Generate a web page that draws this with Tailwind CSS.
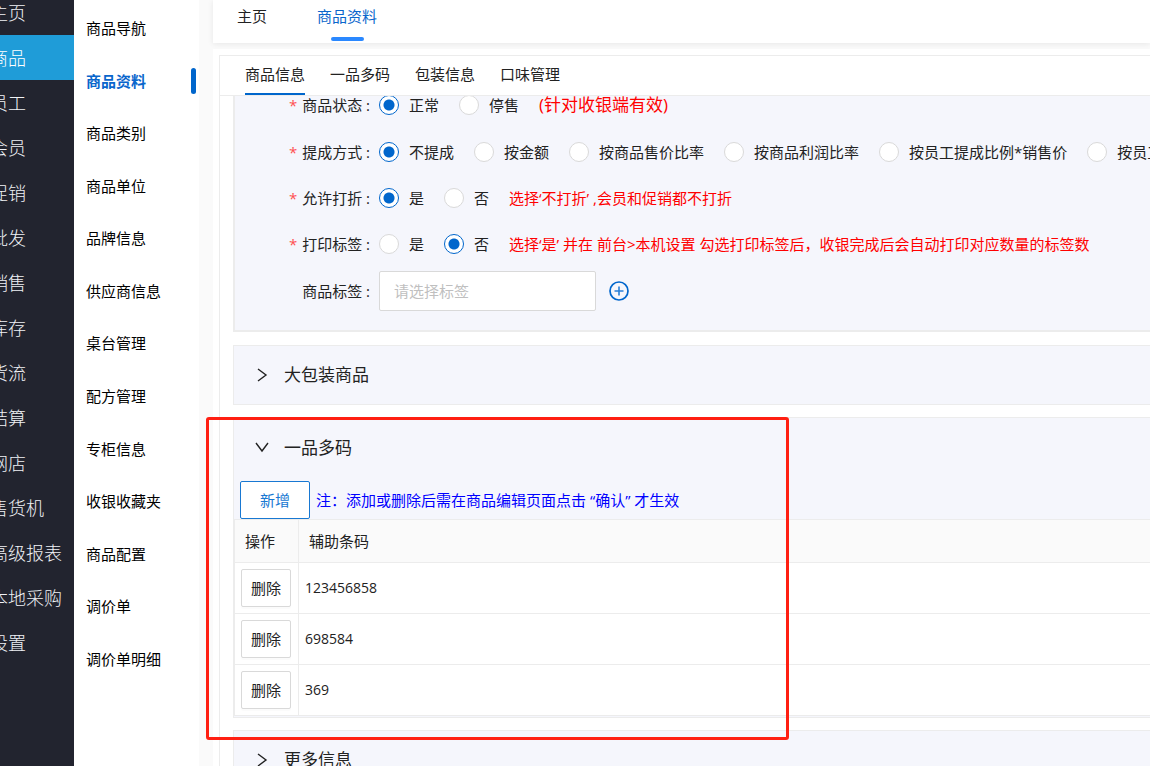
<!DOCTYPE html>
<html lang="zh-CN">
<head>
<meta charset="utf-8">
<meta name="viewport" content="width=device-width, initial-scale=1">
<title>商品资料</title>
<script src="https://cdn.jsdelivr.net/npm/@tailwindcss/browser@4"></script>
</head>
<body class="relative flex h-screen overflow-hidden bg-[#fafafa] font-['Open_Sans','Noto_Sans_CJK_SC',sans-serif] text-[15px] leading-6 font-normal text-[#222]">

<!-- Primary navigation -->
<nav aria-label="主导航" class="w-[74px] shrink-0 overflow-hidden bg-[#22242f] text-lg font-light whitespace-nowrap text-[#f0f2f6]">
  <ul class="-mt-[10px] *:flex *:h-[45px] *:items-center *:pt-px">
    <li class="-ml-[10px]"><a href="#">主页</a></li>
    <li class="bg-[#1f9cd8] text-white"><a href="#" class="-ml-[10px]">商品</a></li>
    <li class="-ml-[10px]"><a href="#">员工</a></li>
    <li class="-ml-[10px]"><a href="#">会员</a></li>
    <li class="-ml-[10px]"><a href="#">促销</a></li>
    <li class="-ml-[10px]"><a href="#">批发</a></li>
    <li class="-ml-[10px]"><a href="#">销售</a></li>
    <li class="-ml-[10px]"><a href="#">库存</a></li>
    <li class="-ml-[10px]"><a href="#">货流</a></li>
    <li class="-ml-[10px]"><a href="#">结算</a></li>
    <li class="-ml-[10px]"><a href="#">网店</a></li>
    <li class="-ml-[10px]"><a href="#">售货机</a></li>
    <li class="-ml-[10px]"><a href="#">高级报表</a></li>
    <li class="-ml-[10px]"><a href="#">本地采购</a></li>
    <li class="-ml-[10px]"><a href="#">设置</a></li>
  </ul>
</nav>

<!-- Secondary navigation -->
<nav aria-label="商品" class="w-[125px] shrink-0 bg-white text-black">
  <ul class="grid h-[685px] auto-rows-fr pt-[2px] pr-[3px] pl-3 *:flex *:items-center">
    <li><a href="#">商品导航</a></li>
    <li class="justify-between font-semibold text-[#0a66cc]"><a href="#">商品资料</a><span class="h-[26px] w-[5px] rounded-sm bg-[#0066cc]"></span></li>
    <li><a href="#">商品类别</a></li>
    <li><a href="#">商品单位</a></li>
    <li><a href="#">品牌信息</a></li>
    <li><a href="#">供应商信息</a></li>
    <li><a href="#">桌台管理</a></li>
    <li><a href="#">配方管理</a></li>
    <li><a href="#">专柜信息</a></li>
    <li><a href="#">收银收藏夹</a></li>
    <li><a href="#">商品配置</a></li>
    <li><a href="#">调价单</a></li>
    <li><a href="#">调价单明细</a></li>
  </ul>
</nav>

<main class="ml-[14px] flex min-w-0 flex-1 flex-col">
  <div class="flex h-[43px] shrink-0 gap-[50px] bg-white pl-6 shadow-[0_1px_6px_rgba(0,0,0,0.08)]">
    <a href="#" class="pt-1">主页</a>
    <a href="#" class="flex flex-col items-center justify-between pt-1 pb-[2px] text-[#0a66cc]">商品资料<span class="h-1 w-[33px] rounded-xs bg-[#2a88ff]"></span></a>
  </div>

  <div class="mt-[6px] flex min-h-0 flex-1 flex-col bg-white pt-[6px] pl-[6px]">
    <div class="flex min-h-0 flex-1 flex-col border-t border-l border-[#ececec]">
      <div class="z-10 flex h-10 shrink-0 gap-[25px] border-b border-[#ececec] bg-white pl-[25px]">
        <a href="#" class="h-[39px] border-b-2 border-[#0066cc] pt-[6px]">商品信息</a>
        <a href="#" class="pt-[6px]">一品多码</a>
        <a href="#" class="pt-[6px]">包装信息</a>
        <a href="#" class="pt-[6px]">口味管理</a>
      </div>

      <div class="flex min-h-0 flex-1 flex-col gap-3 overflow-hidden pl-[13px]">
        <!-- Product settings -->
        <form class="-mt-[14px] mb-px shrink-0 border-b-2 border-l-2 border-[#ececec] bg-[#f5f6fc] pb-4 whitespace-nowrap">
          <fieldset aria-label="商品状态" class="mb-px flex h-[46px] items-center gap-5">
            <div class="-mr-[11px] flex w-[135px] shrink-0 justify-end gap-[5px]"><span class="text-[#ff5050]">*</span><span>商品状态 :</span></div>
            <label class="flex items-center gap-[10px]"><input type="radio" name="status" checked class="size-5 appearance-none rounded-full border border-[#d9d9d9] bg-white checked:border-[#0066cc] checked:bg-[radial-gradient(circle,#0066cc_5px,#fff_6px)]">正常</label>
            <label class="flex items-center gap-[10px]"><input type="radio" name="status" class="size-5 appearance-none rounded-full border border-[#d9d9d9] bg-white checked:border-[#0066cc] checked:bg-[radial-gradient(circle,#0066cc_5px,#fff_6px)]">停售</label>
            <span class="text-[17px] text-[#f00]">(针对收银端有效)</span>
          </fieldset>
          <fieldset aria-label="提成方式" class="flex h-[46px] items-center gap-5">
            <div class="-mr-[11px] flex w-[135px] shrink-0 justify-end gap-[5px]"><span class="text-[#ff5050]">*</span><span>提成方式 :</span></div>
            <label class="flex items-center gap-[10px]"><input type="radio" name="commission" checked class="size-5 appearance-none rounded-full border border-[#d9d9d9] bg-white checked:border-[#0066cc] checked:bg-[radial-gradient(circle,#0066cc_5px,#fff_6px)]">不提成</label>
            <label class="flex items-center gap-[10px]"><input type="radio" name="commission" class="size-5 appearance-none rounded-full border border-[#d9d9d9] bg-white checked:border-[#0066cc] checked:bg-[radial-gradient(circle,#0066cc_5px,#fff_6px)]">按金额</label>
            <label class="flex items-center gap-[10px]"><input type="radio" name="commission" class="size-5 appearance-none rounded-full border border-[#d9d9d9] bg-white checked:border-[#0066cc] checked:bg-[radial-gradient(circle,#0066cc_5px,#fff_6px)]">按商品售价比率</label>
            <label class="flex items-center gap-[10px]"><input type="radio" name="commission" class="size-5 appearance-none rounded-full border border-[#d9d9d9] bg-white checked:border-[#0066cc] checked:bg-[radial-gradient(circle,#0066cc_5px,#fff_6px)]">按商品利润比率</label>
            <label class="flex items-center gap-[10px]"><input type="radio" name="commission" class="size-5 appearance-none rounded-full border border-[#d9d9d9] bg-white checked:border-[#0066cc] checked:bg-[radial-gradient(circle,#0066cc_5px,#fff_6px)]">按员工提成比例*销售价</label>
            <label class="flex items-center gap-[10px]"><input type="radio" name="commission" class="size-5 appearance-none rounded-full border border-[#d9d9d9] bg-white checked:border-[#0066cc] checked:bg-[radial-gradient(circle,#0066cc_5px,#fff_6px)]">按员工</label>
          </fieldset>
          <fieldset aria-label="允许打折" class="flex h-[46px] items-center gap-5">
            <div class="-mr-[11px] flex w-[135px] shrink-0 justify-end gap-[5px]"><span class="text-[#ff5050]">*</span><span>允许打折 :</span></div>
            <label class="flex items-center gap-[10px]"><input type="radio" name="discount" checked class="size-5 appearance-none rounded-full border border-[#d9d9d9] bg-white checked:border-[#0066cc] checked:bg-[radial-gradient(circle,#0066cc_5px,#fff_6px)]">是</label>
            <label class="flex items-center gap-[10px]"><input type="radio" name="discount" class="size-5 appearance-none rounded-full border border-[#d9d9d9] bg-white checked:border-[#0066cc] checked:bg-[radial-gradient(circle,#0066cc_5px,#fff_6px)]">否</label>
            <span class="text-[#f00]">选择‘不打折’ ,会员和促销都不打折</span>
          </fieldset>
          <fieldset aria-label="打印标签" class="flex h-[46px] items-center gap-5">
            <div class="-mr-[11px] flex w-[135px] shrink-0 justify-end gap-[5px]"><span class="text-[#ff5050]">*</span><span>打印标签 :</span></div>
            <label class="flex items-center gap-[10px]"><input type="radio" name="print" class="size-5 appearance-none rounded-full border border-[#d9d9d9] bg-white checked:border-[#0066cc] checked:bg-[radial-gradient(circle,#0066cc_5px,#fff_6px)]">是</label>
            <label class="flex items-center gap-[10px]"><input type="radio" name="print" checked class="size-5 appearance-none rounded-full border border-[#d9d9d9] bg-white checked:border-[#0066cc] checked:bg-[radial-gradient(circle,#0066cc_5px,#fff_6px)]">否</label>
            <span class="text-[#f00]">选择‘是’ 并在 前台&gt;本机设置 勾选打印标签后，收银完成后会自动打印对应数量的标签数</span>
          </fieldset>
          <div class="mt-px flex h-[46px] items-center">
            <label for="tag" class="mr-[9px] w-[135px] shrink-0 text-right">商品标签 :</label>
            <input id="tag" type="text" placeholder="请选择标签" class="h-10 w-[217px] rounded-xs border border-[#d9d9d9] bg-white px-[14px] outline-none placeholder:text-[#bfbfbf]">
            <button type="button" aria-label="添加标签" class="ml-[13px]">
              <svg class="size-5" viewBox="0 0 20 20" fill="none" stroke="#0066cc"><circle cx="10" cy="10" r="9" stroke-width="1.7"/><path d="M10 5.5v9M5.5 10h9" stroke="#2a7fd6" stroke-width="1.6"/></svg>
            </button>
          </div>
        </form>

        <section class="shrink-0 border border-r-0 border-[#ececec] bg-[#f5f6fc]">
          <h2><button type="button" class="flex h-[58px] w-full items-center gap-[15px] pl-[21px] text-[17px]">
            <svg class="size-[14px]" viewBox="0 0 14 14" fill="none" stroke="#222" stroke-width="1.4"><path d="M3 1l8 6-8 6"/></svg>大包装商品</button></h2>
        </section>

        <!-- Additional barcodes -->
        <section class="shrink-0 border border-r-0 border-[#ececec] bg-[#f5f6fc] pb-px">
          <h2><button type="button" class="flex h-[60px] w-full items-center gap-[15px] pl-[21px] text-[17px]">
            <svg class="size-[14px]" viewBox="0 0 14 14" fill="none" stroke="#222" stroke-width="1.4"><path d="M1 2l6 8 6-8"/></svg>一品多码</button></h2>
          <div class="mt-[3px] flex items-center gap-[6px] pl-[6px]">
            <button type="button" class="h-[38px] w-[70px] rounded-xs border border-[#1878d2] bg-white text-[#1878d2]">新增</button>
            <p class="text-[#00f]">注：添加或删除后需在商品编辑页面点击 “确认” 才生效</p>
          </div>
          <table class="w-full border-separate border-spacing-0 border-t border-l border-[#ececec] bg-white">
            <thead>
              <tr class="h-[43px] bg-[#fafafa] text-left">
                <th class="w-16 border-r border-b border-[#ececec] pl-[10px] font-normal">操作</th>
                <th class="border-b border-[#ececec] pl-[10px] font-normal">辅助条码</th>
              </tr>
            </thead>
            <tbody>
              <tr class="h-[51px]">
                <td class="border-r border-b border-[#ececec] pl-[6px]"><button type="button" class="block h-[38px] w-[50px] rounded-xs border border-[#d9d9d9] bg-white shadow-[0_2px_0_rgba(0,0,0,0.015)]">删除</button></td>
                <td class="border-b border-[#ececec] pl-[6px] text-sm">123456858</td>
              </tr>
              <tr class="h-[51px]">
                <td class="border-r border-b border-[#ececec] pl-[6px]"><button type="button" class="block h-[38px] w-[50px] rounded-xs border border-[#d9d9d9] bg-white shadow-[0_2px_0_rgba(0,0,0,0.015)]">删除</button></td>
                <td class="border-b border-[#ececec] pl-[6px] text-sm">698584</td>
              </tr>
              <tr class="h-[51px]">
                <td class="border-r border-b border-[#ececec] pl-[6px]"><button type="button" class="block h-[38px] w-[50px] rounded-xs border border-[#d9d9d9] bg-white shadow-[0_2px_0_rgba(0,0,0,0.015)]">删除</button></td>
                <td class="border-b border-[#ececec] pl-[6px] text-sm">369</td>
              </tr>
            </tbody>
          </table>
        </section>

        <section class="shrink-0 border border-r-0 border-[#ececec] bg-[#f5f6fc]">
          <h2><button type="button" class="flex h-[58px] w-full items-center gap-[15px] pl-[21px] text-[17px]">
            <svg class="size-[14px]" viewBox="0 0 14 14" fill="none" stroke="#222" stroke-width="1.4"><path d="M3 1l8 6-8 6"/></svg>更多信息</button></h2>
        </section>
      </div>
    </div>
  </div>
</main>

<!-- Highlight frame around the barcode section -->
<div class="pointer-events-none absolute top-[417px] left-[206px] z-20 h-[323px] w-[583px] rounded-[3px] border-[3px] border-[#ff1f12]"></div>
</body>
</html>
